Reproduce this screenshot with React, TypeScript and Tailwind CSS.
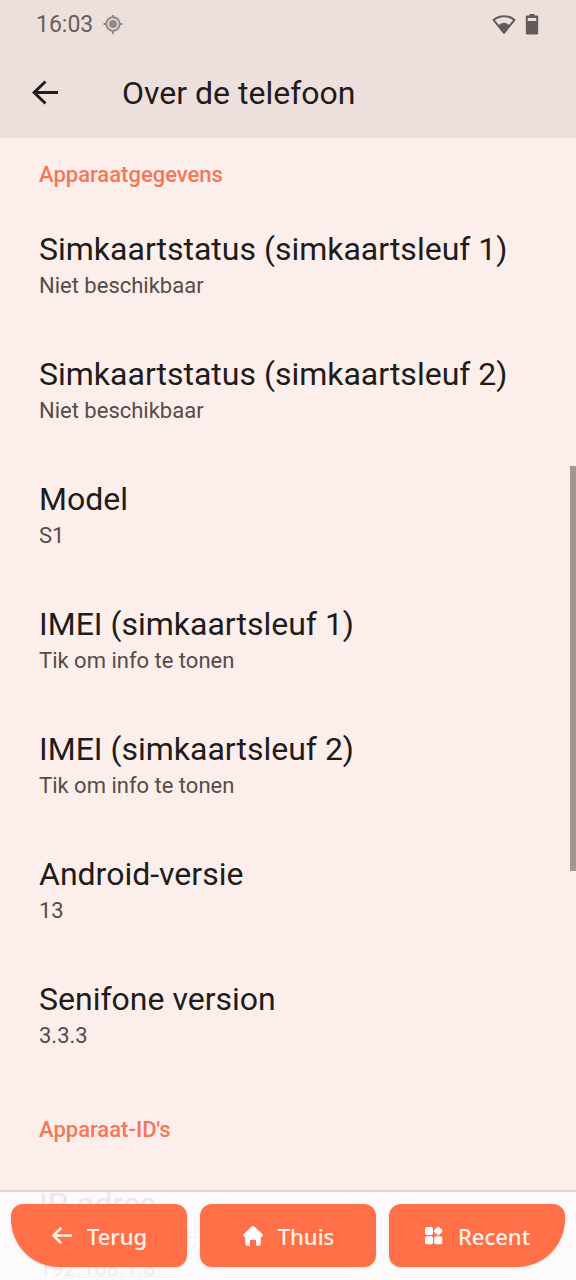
import type { ReactNode } from 'react'

const details = [
    { title: 'Simkaartstatus (simkaartsleuf 1)', value: 'Niet beschikbaar' },
    { title: 'Simkaartstatus (simkaartsleuf 2)', value: 'Niet beschikbaar' },
    { title: 'Model', value: 'S1' },
    { title: 'IMEI (simkaartsleuf 1)', value: 'Tik om info te tonen' },
    { title: 'IMEI (simkaartsleuf 2)', value: 'Tik om info te tonen' },
    { title: 'Android-versie', value: '13' },
    { title: 'Senifone version', value: '3.3.3' },
]

function StatusBar() {
    return (
        <div className="flex h-12 items-center justify-between pl-9 pr-[37px] pt-[2px] text-[#67605f]">
            <div className="flex items-center gap-[10px]">
                <span className="text-[23px] leading-7">16:03</span>
                <svg width="20" height="20" viewBox="0 0 20 20" fill="none" stroke="#928b89" strokeWidth="2">
                    <circle cx="10" cy="9" r="6.7" />
                    <circle cx="10" cy="9" r="4" fill="#928b89" stroke="none" />
                    <path d="M10 0v3M10 15v4M0.5 9h3M16.5 9h3" />
                </svg>
            </div>
            <div className="flex items-center gap-2">
                <svg width="26" height="22" viewBox="0 0 26 22" fill="none">
                    <path d="M2.5 5.9C8.5 0.9 17.5 0.9 23.5 5.9L13 18.8Z" stroke="#635b59" strokeWidth="2" strokeLinejoin="round" />
                    <path d="M7.6 11.3C10.5 7.8 15.5 7.8 18.4 11.3L13 19Z" fill="#635b59" />
                </svg>
                <svg width="14" height="22" viewBox="0 0 14 22" fill="#635b59">
                    <path fillRule="evenodd" d="M4.5 0h5v1.5h2.5a1.2 1.2 0 0 1 1.2 1.2v16.6a1.2 1.2 0 0 1-1.2 1.2H2a1.2 1.2 0 0 1-1.2-1.2V2.7A1.2 1.2 0 0 1 2 1.5h2.5zM2.8 4v3h8.4V4z" />
                </svg>
            </div>
        </div>
    )
}

function SectionTitle({ children }: { children: ReactNode }) {
    return <h2 className="text-[22px] font-medium leading-[30px] text-[#f4775a]">{children}</h2>
}

function DetailItem({ title, value }: { title: string; value: string }) {
    return (
        <li className="h-[125px] pt-[18px]">
            <h3 className="text-[32px] leading-[42px] text-[#211b1a]">{title}</h3>
            <p className="mt-0.5 whitespace-pre-line text-[22px] leading-7 text-[#574b49]">{value}</p>
        </li>
    )
}

export default function App() {
    return (
        <div className="relative flex h-screen flex-col overflow-hidden bg-[#fceeea] font-[Roboto,sans-serif]">
            <header className="shrink-0 bg-[#ede0dc]">
                <StatusBar />
                <div className="flex h-[90px] items-center pl-8">
                    <button aria-label="Terug" className="mr-16">
                        <svg width="26" height="26" viewBox="0 0 26 26" fill="none" stroke="#211b1a" strokeWidth="3">
                            <path d="M26 12.5H3M13.5 1.5L2.2 12.5L13.5 23.5" />
                        </svg>
                    </button>
                    <h1 className="text-[32px] leading-10 text-[#211b1a]">Over de telefoon</h1>
                </div>
            </header>

            <main className="min-h-0 flex-1 overflow-hidden px-[39px] pt-[22px]">
                <SectionTitle>Apparaatgegevens</SectionTitle>
                <ul className="pt-5">
                    {details.map((item) => (
                        <DetailItem key={item.title} title={item.title} value={item.value} />
                    ))}
                </ul>
                <div className="pt-[30px]">
                    <SectionTitle>Apparaat-ID's</SectionTitle>
                </div>
                <ul className="pt-5">
                    <DetailItem title="IP-adres" value={'fe80::a4b2:c8df:\n192.168.1.8'} />
                </ul>
            </main>

            {/* Scroll indicator */}
            <div className="absolute right-0 top-[466px] h-[405px] w-[6px] bg-[#a39793]" />

            {/* Bottom navigation */}
            <nav className="absolute inset-x-0 bottom-0 flex h-[90px] gap-[13px] border-t-2 border-[#e3d5d1] bg-[#fdfbfc]/92 px-[11px] pb-[13px] pt-3 font-['Noto_Sans',sans-serif] text-[22px] font-medium leading-8 text-[#fff1ea]">
                <button className="flex flex-1 items-center justify-center gap-[14px] rounded-xl rounded-bl-[48px] bg-[#ff7049] shadow-sm">
                    <svg width="22" height="20" viewBox="0 0 22 20" fill="none" stroke="currentColor" strokeWidth="2.6" strokeLinecap="round" strokeLinejoin="round">
                        <path d="M20 9.5H3M9.5 2.5L2.5 9.5L9.5 16.5" />
                    </svg>
                    Terug
                </button>
                <button className="flex flex-1 items-center justify-center gap-[14px] rounded-xl bg-[#ff7049] shadow-sm">
                    <svg width="22" height="20" viewBox="0 0 22 20" fill="white">
                        <path d="M9.7 0.6a2 2 0 0 1 2.6 0L20.2 8c1.2 1.1 .5 3-.9 3H18.8v6.7a2 2 0 0 1-2 2h-2.6V15a1.2 1.2 0 0 0-1.2-1.2h-4A1.2 1.2 0 0 0 7.8 15v4.7H5.2a2 2 0 0 1-2-2V11h-.5c-1.4 0-2.1-1.9-.9-3z" />
                    </svg>
                    Thuis
                </button>
                <button className="flex flex-1 items-center justify-center gap-[14px] rounded-xl rounded-br-[48px] bg-[#ff7049] shadow-sm">
                    <svg width="20" height="20" viewBox="0 0 20 20" fill="white">
                        <rect x="1" y="1" width="8" height="8" rx="2" />
                        <rect x="1" y="10.2" width="8" height="8" rx="2" />
                        <rect x="10.2" y="10.2" width="8" height="8" rx="2" />
                        <rect x="10.8" y="1.6" width="6.8" height="6.8" rx="1.6" transform="rotate(45 14.2 5)" />
                    </svg>
                    Recent
                </button>
            </nav>
        </div>
    )
}
